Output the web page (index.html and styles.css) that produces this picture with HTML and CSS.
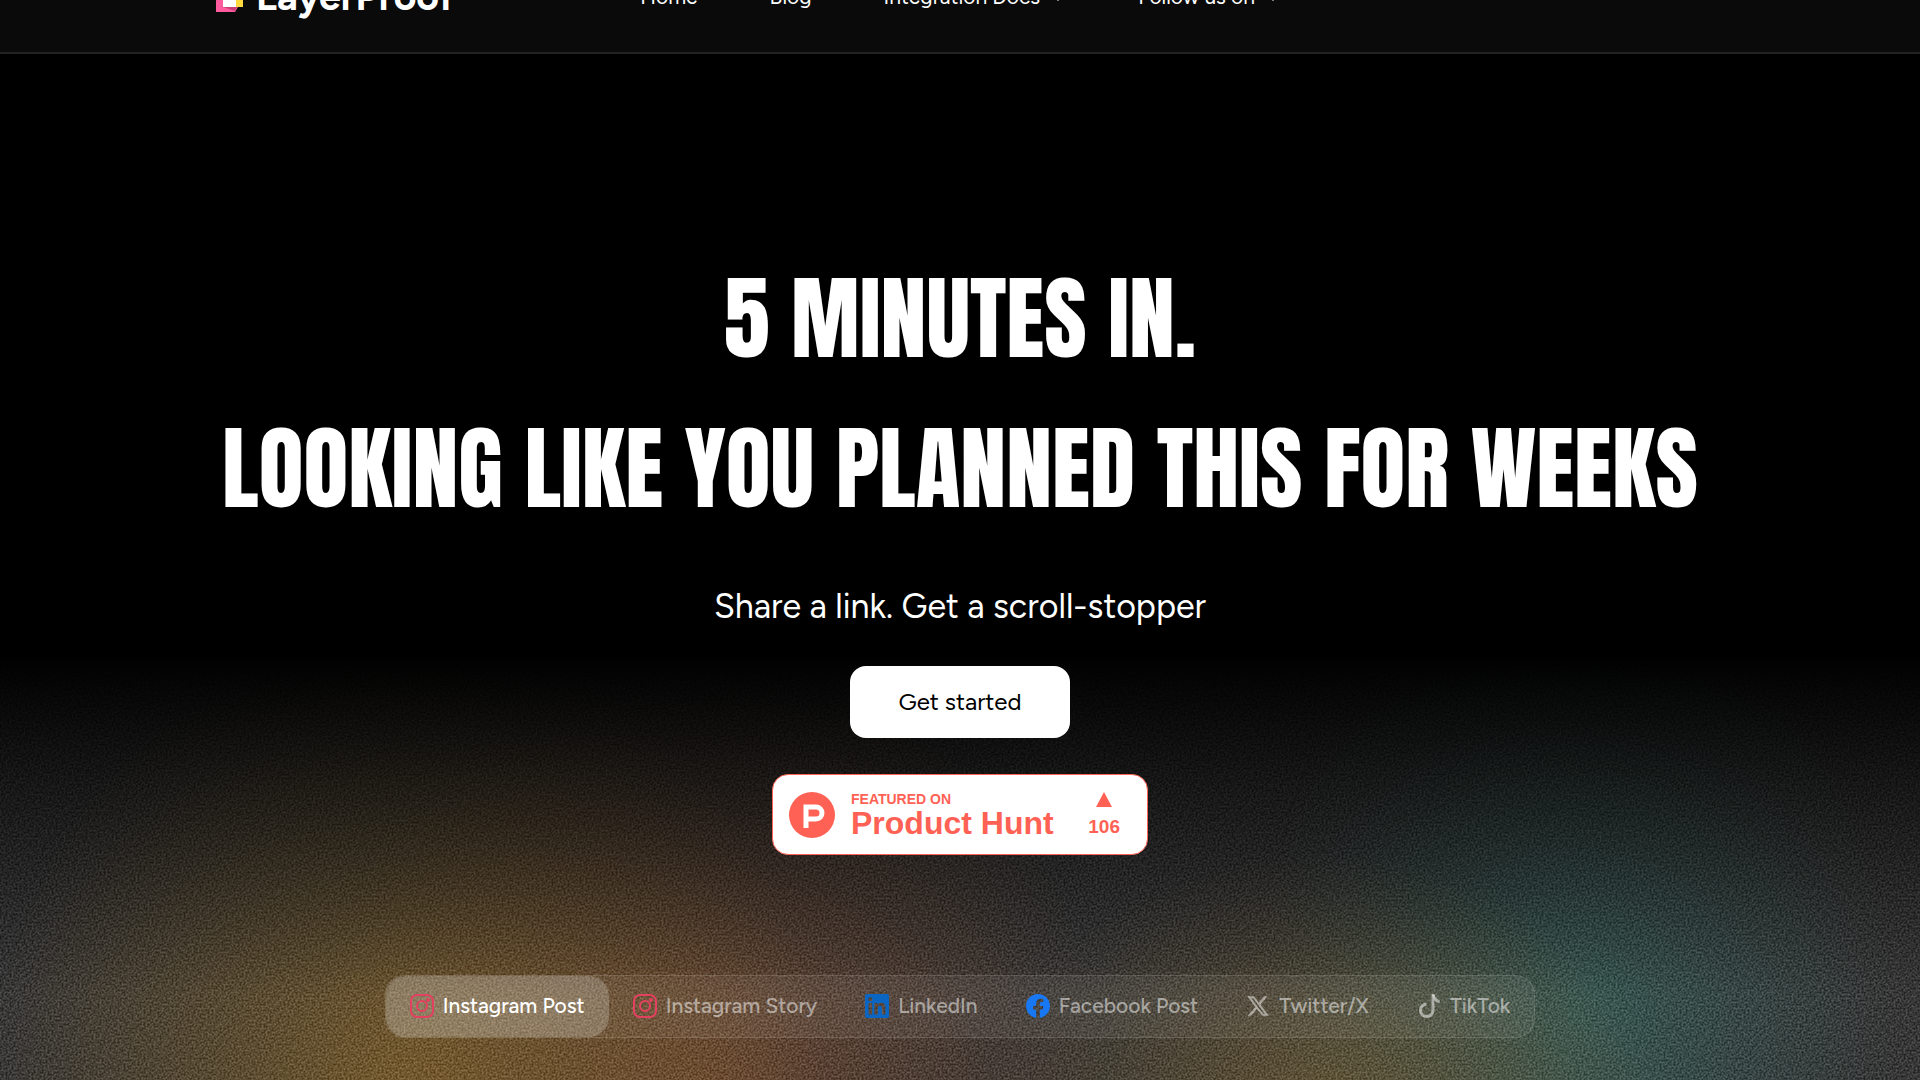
FILE: index.html
```
<!DOCTYPE html>
<html lang="en">
<head>
  <meta charset="UTF-8" />
  <meta name="viewport" content="width=device-width, initial-scale=1.0" />
  <title>LayerProof</title>
  <link rel="stylesheet" href="styles.css">
</head>

<body>
  <header class="site-header">
    <div class="header-inner">
      <a class="logo" href="#">
        <svg class="logo-mark" viewBox="0 0 28 32" aria-hidden="true">
          <path d="M0 0h22v27l-3 5H0z" fill="#ff5a9e" />
          <path d="M7 27l12 4 2-4z" fill="#c93f78" />
          <path d="M18 0h9v27h-9z" fill="#ffd93d" />
          <path d="M7 2h13v25H7z" fill="#fff" />
        </svg>
        <span>LayerProof</span>
      </a>
      <nav class="nav">
        <a href="#">Home</a>
        <a href="#">Blog</a>
        <a href="#">Integration Docs <svg class="chevron" viewBox="0 0 12 12"><path d="M3 6l3 3 3-3" /></svg></a>
        <a href="#">Follow us on <svg class="chevron" viewBox="0 0 12 12"><path d="M3 6l3 3 3-3" /></svg></a>
      </nav>
    </div>
  </header>

  <main class="hero">
    <div class="glow" aria-hidden="true">
      <svg class="grain">
        <filter id="noise" x="0" y="0" width="100%" height="100%" color-interpolation-filters="sRGB">
          <feTurbulence type="fractalNoise" baseFrequency="0.5" numOctaves="3" />
          <feColorMatrix values="2.4 0 0 0 -0.7  2.4 0 0 0 -0.7  2.4 0 0 0 -0.7  0 0 0 0 1" />
        </filter>
        <rect width="100%" height="100%" filter="url(#noise)" />
      </svg>
    </div>

    <h1 class="title">
      <span>5 MINUTES IN.</span>
      <span>LOOKING LIKE YOU PLANNED THIS FOR WEEKS</span>
    </h1>
    <p class="subtitle">Share a link. Get a scroll-stopper</p>
    <button class="cta" type="button">Get started</button>

    <a class="ph-badge" href="#">
      <svg class="ph-logo" viewBox="0 0 46 46" aria-hidden="true">
        <circle cx="23" cy="23" r="23" fill="#ff6154" />
        <path d="M17 36V15h10a6 6 0 0 1 0 12H17" fill="none" stroke="#fff" stroke-width="5" />
      </svg>
      <span class="ph-text">
        <small>FEATURED ON</small>
        <strong>Product Hunt</strong>
      </span>
      <span class="ph-votes">
        <svg viewBox="0 0 16 15" aria-hidden="true"><path d="M8 0l8 15H0z" fill="#ff6154" /></svg>
        106
      </span>
    </a>

    <div class="tabs">
      <button class="tab active" type="button">
        <svg class="icon instagram" viewBox="0 0 24 24"><rect x="1" y="1" width="22" height="22" rx="6" /><circle cx="12" cy="12" r="5" /><circle class="dot" cx="18" cy="6" r="1" /></svg>
        Instagram Post
      </button>
      <button class="tab" type="button">
        <svg class="icon instagram" viewBox="0 0 24 24"><rect x="1" y="1" width="22" height="22" rx="6" /><circle cx="12" cy="12" r="5" /><circle class="dot" cx="18" cy="6" r="1" /></svg>
        Instagram Story
      </button>
      <button class="tab" type="button">
        <svg class="icon linkedin" viewBox="0 0 24 24"><path d="M20.447 20.452h-3.554v-5.569c0-1.328-.027-3.037-1.852-3.037-1.853 0-2.136 1.445-2.136 2.939v5.667H9.351V9h3.414v1.561h.046c.477-.9 1.637-1.85 3.37-1.85 3.601 0 4.267 2.37 4.267 5.455v6.286zM5.337 7.433a2.062 2.062 0 0 1-2.063-2.065 2.064 2.064 0 1 1 2.063 2.065zm1.782 13.019H3.555V9h3.564v11.452zM22.225 0H1.771C.792 0 0 .774 0 1.729v20.542C0 23.227.792 24 1.771 24h20.451C23.2 24 24 23.227 24 22.271V1.729C24 .774 23.2 0 22.222 0h.003z" /></svg>
        LinkedIn
      </button>
      <button class="tab" type="button">
        <svg class="icon facebook" viewBox="0 0 24 24"><path d="M24 12.073c0-6.627-5.373-12-12-12s-12 5.373-12 12c0 5.99 4.388 10.954 10.125 11.854v-8.385H7.078v-3.47h3.047V9.43c0-3.007 1.792-4.669 4.533-4.669 1.312 0 2.686.235 2.686.235v2.953H15.83c-1.491 0-1.956.925-1.956 1.874v2.25h3.328l-.532 3.47h-2.796v8.385C19.612 23.027 24 18.062 24 12.073z" /></svg>
        Facebook Post
      </button>
      <button class="tab" type="button">
        <svg class="icon" viewBox="0 0 24 24"><path d="M18.244 2.25h3.308l-7.227 8.26 8.502 11.24H16.17l-5.214-6.817L4.99 21.75H1.68l7.73-8.835L1.254 2.25H8.08l4.713 6.231zm-1.161 17.52h1.833L7.084 4.126H5.117z" /></svg>
        Twitter/X
      </button>
      <button class="tab" type="button">
        <svg class="icon" viewBox="0 0 24 24"><path d="M9.5 9.9A6.3 6.3 0 1 0 16 16.2V1" fill="none" stroke="currentColor" stroke-width="3" /><path d="M14.5 0h3c.5 3 2.5 5.5 5.2 6v3c-2-.2-4-1-5.2-2.5z" /></svg>
        TikTok
      </button>
    </div>
  </main>
</body>
</html>
```
FILE: styles.css
```
* {
  box-sizing: border-box;
}
body {
  margin: 0;
  background: #000;
  color: #fff;
  font-family: Figtree, Lato, sans-serif;
  height: 100vh;
  display: flex;
  flex-direction: column;
  overflow: hidden;
}
a {
  color: inherit;
  text-decoration: none;
}
button {
  font: inherit;
  border: none;
  cursor: pointer;
}

/* header */
.site-header {
  height: 114px;
  margin-top: -60px;
  flex-shrink: 0;
  background: #0a0a0a;
  border-bottom: 2px solid #222;
}
.header-inner {
  height: 100%;
  padding: 0 216px;
  display: flex;
  align-items: center;
  gap: 186px;
}
.logo {
  display: flex;
  align-items: center;
  gap: 12px;
  font-size: 39px;
  font-weight: 700;
}
.logo-mark {
  width: 28px;
  height: 32px;
}
.nav {
  display: flex;
  gap: 72px;
  font-size: 21px;
}
.nav a {
  display: flex;
  align-items: center;
  gap: 10px;
}
.chevron {
  width: 16px;
  height: 16px;
  fill: none;
  stroke: currentColor;
}

/* hero */
.hero {
  position: relative;
  flex: 1;
  display: flex;
  flex-direction: column;
  align-items: center;
  padding-top: 189px;
}
.glow {
  position: absolute;
  inset: 600px 0 0;
  z-index: -1;
  background:
    radial-gradient(420px 480px at 21% 106%, rgba(140, 98, 24, 0.72), transparent),
    radial-gradient(400px 480px at 37% 106%, rgba(136, 70, 30, 0.6), transparent),
    radial-gradient(340px 260px at 69% 108%, rgba(120, 92, 36, 0.65), transparent),
    radial-gradient(320px 440px at 82% 86%, rgba(40, 100, 92, 0.65), transparent),
    #282828;
  mask-image: linear-gradient(transparent, rgba(0, 0, 0, 0.4) 30%, #000 80%);
}
.grain {
  display: block;
  width: 100%;
  height: 100%;
  opacity: 0.18;
}
.title {
  margin: 0;
  font-family: Anton, "Liberation Sans Narrow", "Liberation Sans", sans-serif;
  font-size: 92px;
  font-weight: 400;
  line-height: 150px;
  text-align: center;
}
.title span {
  display: block;
}
.subtitle {
  margin: 40px 0 35px;
  font-size: 34px;
  line-height: 48px;
}
.cta {
  width: 220px;
  height: 72px;
  padding-bottom: 3px;
  border-radius: 16px;
  background: #fff;
  color: #000;
  font-size: 24px;
}
.ph-badge {
  display: flex;
  align-items: center;
  width: 376px;
  height: 81px;
  margin-top: 36px;
  padding: 0 27px 0 16px;
  border: 1px solid #ff6154;
  border-radius: 16px;
  background: #fff;
  color: #ff6154;
  font-family: "Liberation Sans", sans-serif;
}
.ph-logo {
  width: 46px;
  height: 46px;
}
.ph-text {
  display: flex;
  flex-direction: column;
  margin-left: 16px;
}
.ph-text small {
  font-size: 14px;
  line-height: 16px;
  font-weight: 700;
}
.ph-text strong {
  font-size: 32px;
  line-height: 32px;
}
.ph-votes {
  display: flex;
  flex-direction: column;
  align-items: center;
  gap: 10px;
  margin-left: auto;
  font-size: 19px;
  line-height: 20px;
  font-weight: 700;
}
.ph-votes svg {
  width: 16px;
  height: 15px;
}

/* platform tabs */
.tabs {
  display: flex;
  margin-top: 120px;
  border: 1px solid rgba(255, 255, 255, 0.12);
  border-radius: 20px;
  background: rgba(255, 255, 255, 0.06);
}
.tab {
  display: flex;
  align-items: center;
  gap: 9px;
  height: 61px;
  padding: 0 24px 2px;
  border-radius: 20px;
  background: none;
  color: rgba(255, 255, 255, 0.5);
  font-size: 21px;
  font-weight: 500;
}
.tab.active {
  background: rgba(255, 255, 255, 0.2);
  color: #fff;
}
.icon {
  width: 24px;
  height: 24px;
  fill: currentColor;
}
.instagram {
  fill: none;
  stroke: #e4405f;
  stroke-width: 2;
}
.linkedin {
  fill: #0a66c2;
}
.facebook {
  fill: #1877f2;
}
```
